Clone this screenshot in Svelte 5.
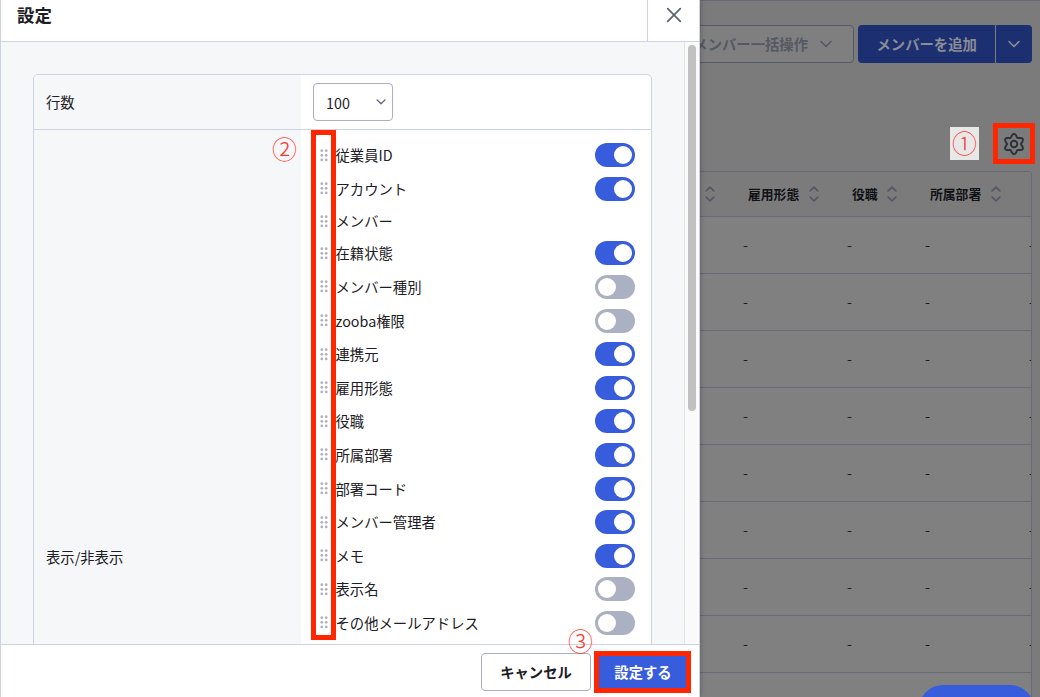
<script>
  const items = [
    ['従業員ID', true], ['アカウント', true], ['メンバー', null], ['在籍状態', true],
    ['メンバー種別', false], ['zooba権限', false], ['連携元', true], ['雇用形態', true],
    ['役職', true], ['所属部署', true], ['部署コード', true], ['メンバー管理者', true],
    ['メモ', true], ['表示名', false], ['その他メールアドレス', false]
  ];
  const columns = ['雇用形態', '役職', '所属部署'];
  const rows = Array.from({ length: 9 });

  // six-lobed outline of the settings gear
  const gear = Array.from({ length: 72 }, (_, i) => {
    const t = (i * Math.PI) / 36;
    const r = 8.55 + 1.55 * Math.cos(6 * t);
    return `${(12 + r * Math.sin(t)).toFixed(2)},${(12 - r * Math.cos(t)).toFixed(2)}`;
  }).join(' ');
</script>

{#snippet sorter()}
  <svg class="sorter" width="10" height="16" viewBox="0 0 10 16"><path d="M1.2 4.8 5 1.2l3.8 3.6M1.2 11.2 5 14.8l3.8-3.6" /></svg>
{/snippet}

<div class="screen">
  <section class="dialog">
    <header>
      <h1>設定</h1>
      <div class="close" role="button" tabindex="-1" aria-label="閉じる">
        <svg width="16" height="16" viewBox="0 0 16 16"><path d="M1.7 1.7l12.6 12.6M14.3 1.7 1.7 14.3" /></svg>
      </div>
    </header>
    <div class="body">
      <div class="content">
        <div class="card">
          <div class="row count">
            <div class="label">行数</div>
            <div class="value">
              <div class="select"><span>100</span>
                <svg width="10" height="6" viewBox="0 0 10 6"><path d="M1 .9 5 4.8 9 .9" /></svg>
              </div>
            </div>
          </div>
          <div class="row fields">
            <div class="label">表示/非表示</div>
            <ul>
              {#each items as [name, on]}
                <li class:fixed={on === null}>
                  <svg class="grip" width="8" height="13" viewBox="0 0 8 13">
                    {#each [1.7, 6.3, 10.9] as y}<circle cx="1.8" cy={y} r="1.35" /><circle cx="6.2" cy={y} r="1.35" />{/each}
                  </svg>
                  <span>{name}</span>
                  {#if on !== null}<i class="toggle" class:on></i>{/if}
                </li>
              {/each}
            </ul>
          </div>
        </div>
      </div>
      <div class="track"><div class="thumb"></div></div>
    </div>
    <footer>
      <button class="cancel">キャンセル</button>
      <button class="submit">設定する</button>
    </footer>
  </section>

  <main>
    <div class="actions">
      <div class="bulk"><span>メンバー一括操作</span><svg width="12" height="8" viewBox="0 0 12 8"><path d="M1 1.5l5 5 5-5" /></svg></div>
      <div class="add"><span>メンバーを追加</span><i><svg width="12" height="8" viewBox="0 0 12 8"><path d="M1 1.5l5 5 5-5" /></svg></i></div>
    </div>
    <div class="tools">
      <svg width="24" height="24" viewBox="0 0 24 24">
        <polygon points={gear} />
        <circle cx="12" cy="12" r="3.2" />
      </svg>
    </div>
    <div class="table">
      <div class="tr th">
        <div>{@render sorter()}</div>
        {#each columns as c}<div><span>{c}</span>{@render sorter()}</div>{/each}
      </div>
      {#each rows as _, i}
        <div class="tr">{#if i < 8}<div></div><div>-</div><div>-</div><div>-</div><div class="next">-</div>{/if}</div>
      {/each}
    </div>
    <div class="pill"></div>
  </main>

  <div class="mark one">①</div>
  <div class="mark two">②</div>
  <div class="mark three">③</div>
  <div class="frame f1"></div>
  <div class="frame f2"></div>
  <div class="frame f3"></div>
</div>

<style>
  :global(body) { overflow: hidden; }
  .screen, .screen * { box-sizing: border-box; }
  .screen { position: relative; display: flex; width: 1040px; height: 697px; overflow: hidden; background: #7b7b7c; color: #1c2025; font-family: "Noto Sans CJK JP", "Noto Sans", sans-serif; font-size: 14.33px; line-height: 20px; }
  svg { display: block; fill: none; stroke-linecap: round; stroke-linejoin: round; }
  button { font: inherit; margin: 0; padding: 0; border: 0; background: none; color: inherit; }
  .dialog { flex: none; width: 700px; height: 697px; display: flex; flex-direction: column; background: #fff; border: solid #cdd3e3; border-width: 0 1px; box-shadow: 0 0 5px #0005; z-index: 1; }
  header { height: 42px; flex: none; display: flex; justify-content: space-between; border-bottom: 1px solid #cdd3e3; }
  h1 { margin: 0; padding: 3px 0 0 16px; font-size: 17.4px; line-height: 24px; font-weight: 700; }
  .close { width: 52px; height: 41px; border-left: 1px solid #cdd3e3; padding: 7px 0 0 18px; }
  .close svg { stroke: #596172; stroke-width: 1.7; }
  .body { flex: 1; min-height: 0; display: flex; background: #f5f7f9; }
  .content { width: 683px; padding: 32px 32px 0; overflow: hidden; }
  .card { border: 1px solid #cdd3e3; border-radius: 5px 5px 0 0; overflow: hidden; background: #fff; height: 700px; }
  .row { display: flex; }
  .count { height: 55px; border-bottom: 1px solid #cdd3e3; }
  .label { width: 267px; flex: none; padding-left: 12px; background: #f5f7f9; }
  .count .label { padding-top: 17px; }
  .fields .label { height: 644px; padding-top: 417px; }
  .value { padding: 8px 12px; }
  .select { width: 80px; height: 38px; border: 1px solid #aab0c2; border-radius: 4px; display: flex; align-items: center; justify-content: space-between; padding: 2px 6px 0 12px; }
  .select svg { stroke: #596172; stroke-width: 1.3; margin-top: -3px; }
  ul { list-style: none; margin: 0; padding: 13.4px 16px 0 19px; flex: 1; display: flex; flex-direction: column; gap: 9.6px; }
  li { display: flex; align-items: center; height: 24px; }
  li.fixed { height: 21.2px; }
  .grip { fill: #aab0c2; margin-right: 7.5px; }
  li span { flex: 1; }
  .toggle { width: 40px; height: 24px; border-radius: 12px; padding: 3px; display: flex; background: #abb1c2; }
  .toggle::before { content: ""; width: 18px; height: 18px; border-radius: 50%; background: #fff; }
  .toggle.on { background: #385ddc; justify-content: flex-end; }
  .track { width: 15px; border-left: 1px solid #e2e3e5; background: #fafafa; padding: 3px 0 0 3px; }
  .thumb { width: 8px; height: 366px; border-radius: 4px; background: #c1c1c1; }
  footer { height: 53px; flex: none; border-top: 1px solid #cdd3e3; display: flex; justify-content: flex-end; gap: 8px; padding: 8px 12px 0 0; font-weight: 700; }
  .cancel { width: 110px; height: 38px; border: 1px solid #aab0c2; border-radius: 4px; }
  .submit { width: 88px; height: 38px; background: #385ddc; color: #fff; }

  main { position: relative; flex: none; width: 340px; height: 697px; border-top: 1px solid #676a75; padding: 24px 8px 0 0; }
  .actions { display: flex; justify-content: flex-end; gap: 4px; height: 38px; font-weight: 700; }
  .bulk { flex: none; width: 190px; display: flex; align-items: center; justify-content: flex-end; gap: 12px; padding-right: 21px; border: 1px solid #565a65; border-radius: 4px; color: #565963; background: #7f7f80; white-space: nowrap; }
  .bulk svg { stroke: #565963; stroke-width: 1.5; }
  .add { flex: none; width: 174px; border-radius: 4px; background: #1c2f70; color: #8a8d96; display: flex; align-items: center; overflow: hidden; }
  .add span { width: 137px; padding-left: 18.5px; white-space: nowrap; }
  .add i { width: 37px; height: 38px; border-left: 1px solid #7b7c80; display: grid; place-items: center; }
  .add svg { stroke: #8a8d96; stroke-width: 1.6; }
  .tools { height: 108px; display: flex; justify-content: flex-end; padding: 69px 6px 0 0; }
  .tools svg { stroke: #2c303a; stroke-width: 1.9; }
  .table { border: 1px solid #676975; border-left: 0; border-radius: 0 4px 0 0; background: #808080; overflow: hidden; height: 540px; }
  .tr { display: grid; grid-template-columns: 34px 104px 78px 114px 20px; height: 57px; padding-left: 1px; align-items: center; border-bottom: 1px solid #676975; color: #1b1c1e; overflow: hidden; }
  .tr > div { padding-left: 8px; }
  .tr .next { padding-left: 0; margin-left: -2px; }
  .th { height: 45px; background: #7b7b7c; font-size: 12.8px; font-weight: 700; color: #101215; }
  .th > div { display: flex; align-items: center; gap: 9.6px; padding-left: 13px; }
  .th > div:first-child { padding-left: 3.5px; }
  .sorter { stroke: #565963; stroke-width: 1.7; }
  .pill { position: absolute; left: 219px; top: 684px; width: 115px; height: 48px; border-radius: 24px; background: #385ddc; }

  .mark { position: absolute; z-index: 3; width: 29px; height: 33px; line-height: 30px; text-align: center; color: #ff3b30; font-size: 25px; font-weight: 300; }
  .one { left: 950px; top: 127px; background: #e8e8e8; }
  .two { left: 270px; top: 133px; }
  .three { left: 566px; top: 625px; }
  .frame { position: absolute; z-index: 2; border: 5px solid #ff2600; }
  .f1 { left: 993px; top: 123px; width: 42px; height: 41px; }
  .f2 { left: 311px; top: 130px; width: 25px; height: 510px; }
  .f3 { left: 594px; top: 651px; width: 97px; height: 42px; }
</style>
